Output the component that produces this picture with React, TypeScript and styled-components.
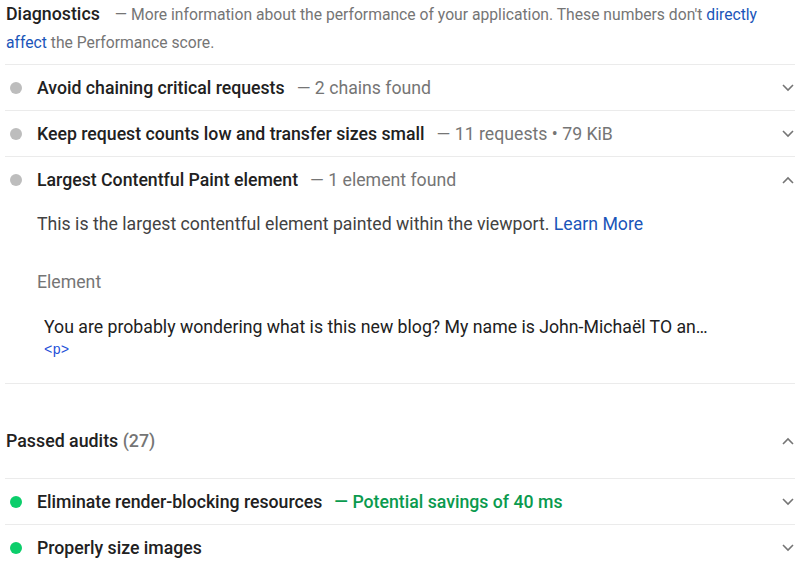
import React from 'react';
import styled, { createGlobalStyle } from 'styled-components';

const GlobalStyle = createGlobalStyle`
  body {
    margin: 0;
    background: #ffffff;
    font-family: Roboto, 'Noto Sans', sans-serif;
    color: #212121;
  }
`;

type Status = 'info' | 'pass';

interface Audit {
  title: string;
  display?: string;
  status: Status;
  expanded?: boolean;
}

const diagnostics: Audit[] = [
  { title: 'Avoid chaining critical requests', display: '2 chains found', status: 'info' },
  { title: 'Keep request counts low and transfer sizes small', display: '11 requests • 79 KiB', status: 'info' },
  { title: 'Largest Contentful Paint element', display: '1 element found', status: 'info', expanded: true },
];

const passed: Audit[] = [
  { title: 'Eliminate render-blocking resources', display: 'Potential savings of 40 ms', status: 'pass' },
  { title: 'Properly size images', status: 'pass' },
];

const Chevron: React.FC<{ up?: boolean }> = ({ up }) => (
  <svg width="12" height="8" viewBox="0 0 12 8">
    <polyline
      points={up ? '1,7 6,2 11,7' : '1,1 6,6 11,1'}
      fill="none"
      stroke="#757575"
      strokeWidth="1.6"
    />
  </svg>
);

const AuditRow: React.FC<{ audit: Audit }> = ({ audit }) => (
  <AuditItem>
    <Summary>
      <Dot status={audit.status} />
      <Title>{audit.title}</Title>
      {audit.display && <Display status={audit.status}>— {audit.display}</Display>}
      <Spacer />
      <Chevron up={audit.expanded} />
    </Summary>
    {audit.expanded && (
      <Details>
        <Description>
          This is the largest contentful element painted within the viewport. <Link>Learn More</Link>
        </Description>
        <TableHead>Element</TableHead>
        <NodeCell>
          <NodeText>You are probably wondering what is this new blog? My name is John-Michaël TO an…</NodeText>
          <Snippet>&lt;p&gt;</Snippet>
        </NodeCell>
      </Details>
    )}
  </AuditItem>
);

export default function App() {
  return (
    <>
      <GlobalStyle />
      <Report>
        <GroupIntro>
          <GroupTitle>Diagnostics</GroupTitle>
          <GroupDescription>
            — More information about the performance of your application. These numbers don't{' '}
            <Link>directly affect</Link> the Performance score.
          </GroupDescription>
        </GroupIntro>
        {diagnostics.map((a) => (
          <AuditRow key={a.title} audit={a} />
        ))}
        <PassedGroup>
          <PassedHeader>
            <GroupTitle>
              Passed audits <Count>(27)</Count>
            </GroupTitle>
            <Spacer />
            <Chevron up />
          </PassedHeader>
          {passed.map((a) => (
            <AuditRow key={a.title} audit={a} />
          ))}
        </PassedGroup>
      </Report>
    </>
  );
}

const Report = styled.div`
  padding: 0 5px;
  width: 790px;
`;

const GroupIntro = styled.div`
  height: 56px;
  padding: 0 0 8px 1px;
  line-height: 28px;
`;

const GroupTitle = styled.span`
  font-size: 17.8px;
  line-height: 28px;
  font-weight: 500;
  color: #212121;
  margin-right: 15px;
`;

const GroupDescription = styled.span`
  font-size: 15.7px;
  line-height: 28px;
  color: #757575;
`;

const Link = styled.span`
  color: #1a55b9;
`;

const Count = styled.span`
  color: #757575;
`;

const AuditItem = styled.div`
  border-top: 1px solid #ebebeb;
`;

const Summary = styled.div`
  display: flex;
  align-items: center;
  height: 45px;
  padding: 0 1px 0 5px;
`;

const Dot = styled.span<{ status: Status }>`
  width: 12px;
  height: 12px;
  border-radius: 50%;
  flex: none;
  background: ${(p) => (p.status === 'pass' ? '#0cce6b' : '#bdbdbd')};
  margin-right: 15px;
`;

const Title = styled.span`
  font-size: 17.7px;
  font-weight: 500;
  color: #212121;
  margin-right: 12px;
`;

const Display = styled.span<{ status: Status }>`
  font-size: 17.7px;
  font-weight: ${(p) => (p.status === 'pass' ? 500 : 400)};
  color: ${(p) => (p.status === 'pass' ? '#0a9a4e' : '#757575')};
`;

const Spacer = styled.span`
  flex: 1;
`;

const Details = styled.div`
  padding: 10px 0 24px 32px;
`;

const Description = styled.div`
  font-size: 17.7px;
  line-height: 24px;
  color: #424242;
`;

const TableHead = styled.div`
  margin-top: 34px;
  font-size: 17.7px;
  line-height: 24px;
  color: #757575;
`;

const NodeCell = styled.div`
  margin-top: 21px;
  padding-left: 7px;
`;

const NodeText = styled.div`
  font-size: 17.7px;
  line-height: 24px;
  color: #212121;
`;

const Snippet = styled.div`
  font-family: 'Liberation Mono', monospace;
  font-size: 14px;
  line-height: 18px;
  margin-top: 2px;
  color: #2450d8;
`;

const PassedGroup = styled.div`
  border-top: 1px solid #ebebeb;
  padding-top: 34px;
`;

const PassedHeader = styled.div`
  display: flex;
  align-items: center;
  height: 46px;
  margin-bottom: 14px;
  padding: 0 1px 0 1px;
`;
